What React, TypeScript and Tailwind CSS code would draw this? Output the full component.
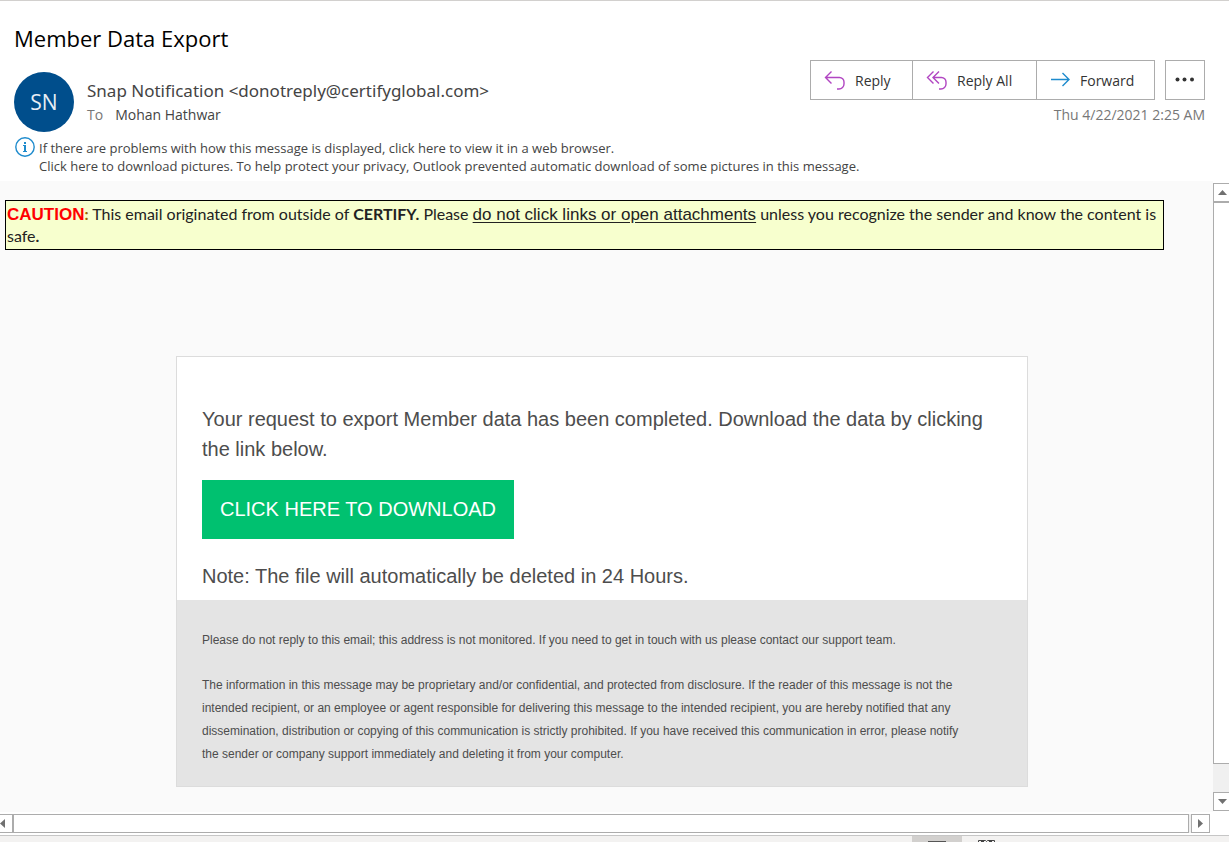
import type { ReactNode } from "react";

function ReplyIcon() {
  return (
    <svg width="22" height="22" viewBox="0 0 22 22" fill="none" stroke="#b146c2" strokeWidth="1.4" aria-hidden="true">
      <path d="M7.500 2.500 1.500 8.500l6 6M1.500 8.500H15.500a4.500 4.500 0 0 1 4.500 4.500v2a5 5 0 0 1-5 5h-2" />
    </svg>
  );
}

function ReplyAllIcon() {
  return (
    <svg width="22" height="22" viewBox="0 0 22 22" fill="none" stroke="#b146c2" strokeWidth="1.4" aria-hidden="true">
      <path d="M7.500 2.500 1.500 8.500l6 6M13 2.500 7 8.500l6 6M7 8.500h8.500a4.500 4.500 0 0 1 4.500 4.500v2a5 5 0 0 1-5 5h-2" />
    </svg>
  );
}

function ForwardIcon() {
  return (
    <svg width="22" height="22" viewBox="0 0 22 22" fill="none" stroke="#1e8bcd" strokeWidth="1.400" aria-hidden="true">
      <path d="M1 10.500h17.500M12.500 4l6.500 6.500-6.500 6.500" />
    </svg>
  );
}

function InfoIcon() {
  return (
    <svg className="shrink-0" width="20" height="20" viewBox="0 0 20 20" aria-hidden="true">
      <circle cx="10" cy="10" r="9.200" fill="#fff" stroke="#1e8bcd" strokeWidth="1.400" />
      <path d="M8 8h3v6h1v1H8v-1h1V9H8zM9 5h2v2H9z" fill="#1e8bcd" />
    </svg>
  );
}

function ActionButton({ icon, label, className }: { icon: ReactNode; label: string; className: string }) {
  return (
    <button type="button" className={`flex h-10 items-center border border-[#acacac] bg-white text-[#333] ${className}`}>
      {icon}
      {label}
    </button>
  );
}

function Header() {
  return (
    <header className="border-t border-[#d2d0ce] bg-white pt-[22px] pr-6 pb-[6px] pl-[14px]">
      <h1 className="text-[22px] leading-[30px] text-black">Member Data Export</h1>
      <div className="mt-[7px] flex items-start">
        <div className="mt-3 flex size-[60px] shrink-0 items-center justify-center rounded-full bg-[#004e8c] pt-[2px] text-[21px] text-[#e8eef5]">
          SN
        </div>
        <div className="mt-[19px] ml-[13px] min-w-0 flex-1">
          <p className="font-['Noto_Sans',sans-serif] text-[17px] leading-6 text-[#444]">
            Snap Notification &lt;donotreply@certifyglobal.com&gt;
          </p>
          <p className="flex gap-3 text-[14px] leading-6 text-[#444]">
            <span className="text-[#777]">To</span>
            <span>Mohan Hathwar</span>
          </p>
        </div>
        <div className="flex shrink-0 flex-col items-end">
          <div className="flex text-[14px]">
            <ActionButton icon={<ReplyIcon />} label="Reply" className="w-[103px] gap-[9px] pl-[13px]" />
            <ActionButton icon={<ReplyAllIcon />} label="Reply All" className="-ml-px w-[125px] gap-[9px] pl-[13px]" />
            <ActionButton icon={<ForwardIcon />} label="Forward" className="-ml-px w-[119px] gap-2 pl-[13px]" />
            <button
              type="button"
              aria-label="More actions"
              className="ml-[10px] flex size-10 items-center justify-center border border-[#acacac]"
            >
              <svg width="20" height="6" viewBox="0 0 20 6" fill="#333" aria-hidden="true">
                <circle cx="2.500" cy="2.500" r="2" />
                <circle cx="9.500" cy="2.500" r="2" />
                <circle cx="17" cy="2.500" r="2" />
              </svg>
            </button>
          </div>
          <time className="mt-1 text-[14px] leading-[22px] text-[#777]">Thu 4/22/2021 2:25 AM</time>
        </div>
      </div>
      <div className="mt-[5px] ml-px flex gap-[4px] text-[13px] leading-[18px] text-[#444]">
        <InfoIcon />
        <div className="mt-[2px]">
          <p>If there are problems with how this message is displayed, click here to view it in a web browser.</p>
          <p>
            Click here to download pictures. To help protect your privacy, Outlook prevented automatic download of some
            pictures in this message.
          </p>
        </div>
      </div>
    </header>
  );
}

function Caution() {
  return (
    <div className="mr-[35px] border border-black bg-[#f7ffce] px-px py-[2px] font-[Lato,sans-serif] text-[16px] leading-[22px] text-[#222]">
      <strong className="font-['Liberation_Sans',sans-serif] text-[17px] leading-none text-[#f00]">CAUTION</strong>
      <strong className="text-[#9c6500]">:</strong> This email originated from outside of <strong>CERTIFY.</strong>{" "}
      Please{" "}
      <u className="font-['Liberation_Sans',sans-serif] text-[17px] leading-none underline-offset-2">
        do not click links or open attachments
      </u>{" "}
      unless you recognize the sender and know the content is safe<strong>.</strong>
    </div>
  );
}

function MessageCard() {
  return (
    <article className="mx-auto mt-[106px] max-w-[852px] border border-[#dcdcdc] bg-white font-['Liberation_Sans',sans-serif] text-[#4d4d4d]">
      <div className="px-[25px] pt-[47px] pb-[9px] text-[20px] leading-[30px]">
        <p>Your request to export Member data has been completed. Download the data by clicking the link below.</p>
        <a href="#download" className="mt-4 inline-block bg-[#00c170] px-[18px] py-[14px] leading-[31px] text-white">
          CLICK HERE TO DOWNLOAD
        </a>
        <p className="mt-[22px]">Note: The file will automatically be deleted in 24 Hours.</p>
      </div>
      <div className="bg-[#e4e4e4] pt-[29px] pr-[54px] pb-5 pl-[25px] text-[12px] leading-[22px]">
        <p>
          Please do not reply to this email; this address is not monitored. If you need to get in touch with us please
          contact our support team.
        </p>
        <p className="mt-[23px] leading-[23px]">
          The information in this message may be proprietary and/or confidential, and protected from disclosure. If the
          reader of this message is not the intended recipient, or an employee or agent responsible for delivering this
          message to the intended recipient, you are hereby notified that any dissemination, distribution or copying of
          this communication is strictly prohibited. If you have received this communication in error, please notify the
          sender or company support immediately and deleting it from your computer.
        </p>
      </div>
    </article>
  );
}

function Arrow({ d, w, h }: { d: string; w: number; h: number }) {
  return (
    <svg width={w} height={h} viewBox={`0 0 ${w} ${h}`} fill="#707070" aria-hidden="true">
      <path d={d} />
    </svg>
  );
}

function VerticalScrollbar() {
  return (
    <div className="mt-[2px] mb-px flex w-4 shrink-0 flex-col bg-[#f0f0f0]">
      <button type="button" aria-label="Scroll up" className="flex h-[19px] items-center border border-r-0 border-[#acacac] bg-white pl-1">
        <Arrow d="M0 5 4.500 0 9 5z" w={9} h={5} />
      </button>
      <div className="flex-1 border border-r-0 border-[#acacac] bg-white" />
      <div className="h-7" />
      <button type="button" aria-label="Scroll down" className="flex h-[19px] items-center border border-r-0 border-[#acacac] bg-white pl-1">
        <Arrow d="M0 0 4.500 5 9 0z" w={9} h={5} />
      </button>
    </div>
  );
}

function HorizontalScrollbar() {
  return (
    <div className="mt-[2px] mr-[19px] flex h-[19px] shrink-0 bg-[#f0f0f0]">
      <button type="button" aria-label="Scroll left" className="flex w-[13px] items-center border border-l-0 border-[#acacac] bg-white">
        <Arrow d="M5 0 0 4.500 5 9z" w={5} h={9} />
      </button>
      <div className="flex-1 border border-[#acacac] bg-white" />
      <button type="button" aria-label="Scroll right" className="ml-[2px] flex w-[19px] items-center justify-center border border-[#acacac] bg-white">
        <Arrow d="M0 0 5 4.500 0 9z" w={5} h={9} />
      </button>
    </div>
  );
}

function StatusBar() {
  return (
    <footer className="mt-[2px] flex h-[7px] shrink-0 justify-end overflow-hidden border-t border-[#c6c6c6] bg-[#f3f2f1] pr-[234px]">
      <button type="button" aria-label="Normal view" className="flex w-[50px] items-end justify-center bg-[#d2d0ce]">
        <span className="h-px w-[18px] bg-[#555]" />
      </button>
      <button type="button" aria-label="Reading view" className="ml-4 flex items-end">
        <svg width="17" height="2" viewBox="0 0 17 2" fill="none" stroke="#444" aria-hidden="true">
          <path d="M.500 2V.500h7l1 1 1-1h7V2M3 1.500h3M11 1.500h3" />
        </svg>
      </button>
    </footer>
  );
}

export default function App() {
  return (
    <div className="flex min-h-screen flex-col bg-white font-['Open_Sans',sans-serif]">
      <Header />
      <div className="flex flex-1">
        <main className="min-w-0 flex-1 bg-[#fafafa] pt-[19px] pr-[14px] pb-6 pl-[5px]">
          <Caution />
          <MessageCard />
        </main>
        <VerticalScrollbar />
      </div>
      <HorizontalScrollbar />
      <StatusBar />
    </div>
  );
}
